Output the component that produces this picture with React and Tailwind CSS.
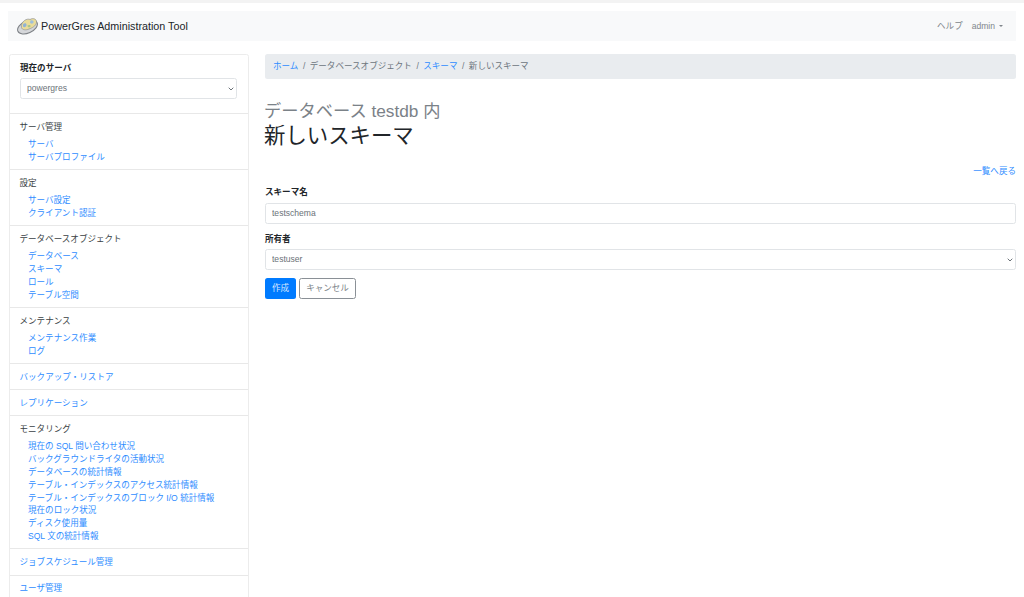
const menu = [
  { title: 'サーバ管理', links: ['サーバ', 'サーバプロファイル'] },
  { title: '設定', links: ['サーバ設定', 'クライアント認証'] },
  { title: 'データベースオブジェクト', links: ['データベース', 'スキーマ', 'ロール', 'テーブル空間'] },
  { title: 'メンテナンス', links: ['メンテナンス作業', 'ログ'] },
  { href: 'バックアップ・リストア' },
  { href: 'レプリケーション' },
  {
    title: 'モニタリング',
    links: [
      '現在の SQL 問い合わせ状況',
      'バックグラウンドライタの活動状況',
      'データベースの統計情報',
      'テーブル・インデックスのアクセス統計情報',
      'テーブル・インデックスのブロック I/O 統計情報',
      '現在のロック状況',
      'ディスク使用量',
      'SQL 文の統計情報',
    ],
  },
  { href: 'ジョブスケジュール管理' },
  { href: 'ユーザ管理' },
];

function Logo() {
  return (
    <svg width="22" height="20" viewBox="0 0 22 20" className="shrink-0">
      <ellipse cx="10.5" cy="11" rx="10.5" ry="6" transform="rotate(-24 10.5 11)" fill="#d5d7da" stroke="#7d8186" strokeWidth="1" />
      <path d="M5 7.5 C7 3.5 11 2.5 13 3.5 C16 1.5 20 3 19.5 6.5 C19 10 15 12 12 13 C9 14.5 5 14 4.5 11.5 C4.2 10 4.5 8.5 5 7.5 Z" fill="#e9dc9a" stroke="#8f9296" strokeWidth="0.7" />
      <path d="M6 8.5 C7.5 6.5 9.5 7 9.5 9 C9.5 11 7 12 6 10.5 Z" fill="#8fb2d6" />
      <path d="M13.5 4.5 C15 4 17 4.5 16.5 6.5 C16 8 13.5 8 13 6.5 Z" fill="#9dbfdc" />
      <path d="M10.5 9.5 C12 8.5 14 9 13.5 10.5 C12.5 12 10.5 11.5 10.5 9.5 Z" fill="#a9c48a" />
    </svg>
  );
}

function Select({ value, className }) {
  return (
    <div className={`relative ${className}`}>
      <select className="block w-full h-[21px] pl-[6px] appearance-none border border-[#e1e4e7] rounded-[2.5px] bg-white text-[#6b7278] text-[8.55px] outline-none">
        <option>{value}</option>
      </select>
      <svg width="6" height="4" viewBox="0 0 6 4" className="absolute right-[3px] top-[9px] pointer-events-none">
        <path d="M0.7 0.7 L3 3 L5.3 0.7" fill="none" stroke="#6b7278" strokeWidth="1" />
      </svg>
    </div>
  );
}

function Sidebar() {
  return (
    <aside className="w-[240px] shrink-0 self-start border border-[#ececec] rounded-[2.5px] bg-white">
      <div className="pt-[6.5px] pb-[14px] px-[10px]">
        <div className="font-bold text-[#212529] mb-[3.5px]">現在のサーバ</div>
        <Select value="powergres" className="w-[217px]" />
      </div>
      {menu.map((s) => (
        <div key={s.title || s.href} className="border-t border-[#e8e8e8] pl-[9.5px] pr-[10px] pt-[6.8px] pb-[5.6px]">
          {s.href ? (
            <a className="block text-[#2f8dff]">{s.href}</a>
          ) : (
            <>
              <div className="text-[#3a3f44]">{s.title}</div>
              <ul className="mt-[4.4px] pl-[8.5px]">
                {s.links.map((l) => (
                  <li key={l}>
                    <a className="text-[#2f8dff]">{l}</a>
                  </li>
                ))}
              </ul>
            </>
          )}
        </div>
      ))}
    </aside>
  );
}

export default function App() {
  return (
    <div className="h-screen overflow-hidden bg-white text-[8.55px] leading-[12.8px] text-[#212529] font-['Liberation_Sans','Noto_Sans_CJK_JP',sans-serif]">
      <div className="h-[3px] bg-[#f3f3f3]" />

      <nav className="mx-[8px] mt-[8px] h-[30px] bg-[#f8f9fa] flex items-center justify-between pl-[9px] pr-[13px]">
        <div className="flex items-center gap-[2px]">
          <Logo />
          <span className="text-[10.75px] text-[#212529] mt-[1px]">PowerGres Administration Tool</span>
        </div>
        <div className="flex items-center mt-[1px] text-[#80868b]">
          <span>ヘルプ</span>
          <span className="ml-[9px]">admin</span>
          <span className="ml-[4px] border-x-[2.5px] border-x-transparent border-t-[2.5px] border-t-[#80868b]" />
        </div>
      </nav>

      <div className="flex items-start gap-[16px] mt-[13px] pl-[9px] pr-[8px]">
        <Sidebar />

        <main className="flex-1 min-w-0">
          <div className="h-[25px] flex items-center gap-[4.5px] px-[8px] bg-[#e9ecef] rounded-[2.5px] text-[#6c757d]">
            <a className="text-[#2f8dff]">ホーム</a>
            <span>/</span>
            <span>データベースオブジェクト</span>
            <span>/</span>
            <a className="text-[#2f8dff]">スキーマ</a>
            <span>/</span>
            <span>新しいスキーマ</span>
          </div>

          <h3 className="mt-[22px] -ml-[1px] text-[17.25px] leading-[21px] text-[#7b8288]">データベース testdb 内</h3>
          <h2 className="mt-[1px] -ml-[1px] text-[21.4px] leading-[26px] text-[#212529]">新しいスキーマ</h2>

          <div className="mt-[16px] text-right">
            <a className="text-[#2f8dff]">一覧へ戻る</a>
          </div>

          <form>
            <label className="block mt-[8px] mb-[4px] font-bold">スキーマ名</label>
            <input
              readOnly
              value="testschema"
              className="block w-full h-[21px] px-[6px] border border-[#e1e4e7] rounded-[2.5px] text-[#6b7278] text-[8.55px] outline-none"
            />
            <label className="block mt-[9px] mb-[4px] font-bold">所有者</label>
            <Select value="testuser" className="w-full" />
            <div className="flex gap-[3px] mt-[8px]">
              <button type="button" className="w-[31px] h-[21px] rounded-[2.5px] bg-[#007bff] text-[#d8e9ff]">作成</button>
              <button type="button" className="w-[57px] h-[21px] rounded-[2.5px] border border-[#8a9096] bg-white text-[#7b8288]">キャンセル</button>
            </div>
          </form>
        </main>
      </div>
    </div>
  );
}
